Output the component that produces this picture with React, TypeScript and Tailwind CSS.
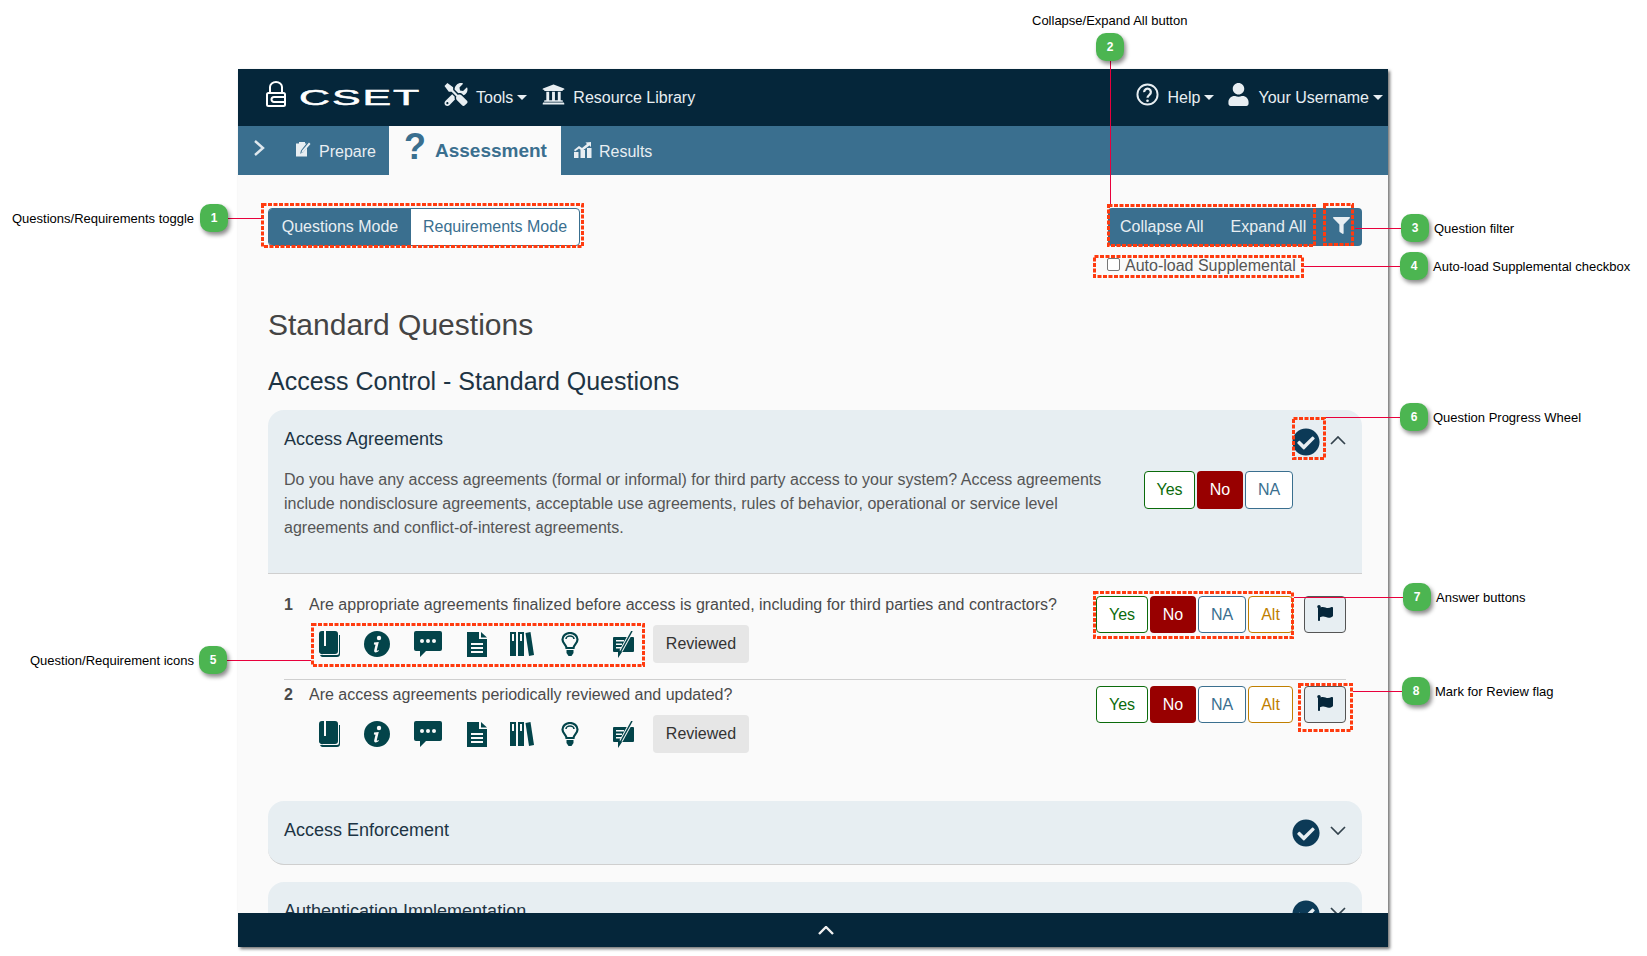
import { FaFilter, FaFlag, FaCheckCircle, FaUser, FaTools, FaUniversity } from 'react-icons/fa'

const Caret = () => (
  <span className="block ml-[4px] w-0 h-0 border-x-[5px] border-t-[5px] border-x-transparent border-t-[#e8eef2]" />
)

function BookIcon() {
  return (
    <svg viewBox="0 0 21 26" className="w-[21px] h-[26px] ml-[11px] fill-[#03444a]">
      <path d="M3 0h2v15h2V0h9a3 3 0 0 1 3 3v17a3 3 0 0 1-3 3H4a3 3 0 0 1-4-3V3a3 3 0 0 1 3-3z" />
      <path d="M20 4h1v19a3 3 0 0 1-3 3H4a3 3 0 0 1-3-2h17a2 2 0 0 0 2-2z" />
    </svg>
  )
}

function InfoIcon() {
  return (
    <svg viewBox="0 0 26 26" className="w-[26px] h-[26px] ml-[24px]">
      <circle cx="13" cy="13" r="13" fill="#03444a" />
      <circle cx="15" cy="7" r="2.2" fill="#fafafa" />
      <path d="M10 11.500l4.800-.6-2 8.200c-.2.8.4 1 1.600-.1l.5.7c-2 2.200-5.300 2.500-4.700-.4l1.300-5.600-1.600-.3z" fill="#fafafa" />
    </svg>
  )
}

function CommentIcon() {
  return (
    <svg viewBox="0 0 28 26" className="w-[28px] h-[26px] ml-[24px] fill-[#03444a]">
      <path d="M2 0h24a2 2 0 0 1 2 2v16a2 2 0 0 1-2 2H12l-6 6v-6H2a2 2 0 0 1-2-2V2a2 2 0 0 1 2-2z" />
      <circle cx="8" cy="10" r="2" fill="#fafafa" />
      <circle cx="14" cy="10" r="2" fill="#fafafa" />
      <circle cx="20" cy="10" r="2" fill="#fafafa" />
    </svg>
  )
}

function DocIcon() {
  return (
    <svg viewBox="0 0 20 25" className="w-[20px] h-[25px] ml-[25px] fill-[#03444a]">
      <path d="M0 0h12v7h8v18H0z" />
      <path d="M14 0l6 5.500h-6z" />
      <rect x="4" y="11" width="12" height="2" fill="#fafafa" />
      <rect x="4" y="15" width="12" height="2" fill="#fafafa" />
      <rect x="4" y="19" width="12" height="2" fill="#fafafa" />
    </svg>
  )
}

function BooksIcon() {
  return (
    <svg viewBox="0 0 24 24" className="w-[24px] h-[24px] ml-[23px] fill-[#03444a]">
      <path d="M0 0h6v24H0z" />
      <path d="M8 0h6v24H8z" />
      <path d="M15.500 1l5-1L24 23l-5 1z" />
      <rect x="2" y="2" width="2" height="7" fill="#fafafa" />
      <rect x="10" y="2" width="2" height="7" fill="#fafafa" />
    </svg>
  )
}

function BulbIcon() {
  return (
    <svg viewBox="0 0 18 24" className="w-[18px] h-[24px] ml-[27px]" fill="none" stroke="#03444a">
      <path d="M5.500 16c0-3-4-4.500-4-8.500a7.500 6.500 0 0 1 15 0c0 4-4 5.500-4 8.500z" strokeWidth="2.200" />
      <path d="M5 7a4 3 0 0 1 8 0" strokeWidth="1.600" />
      <path d="M5.500 18h7v3l-2 3h-3l-2-3z" fill="#03444a" stroke="none" />
    </svg>
  )
}

function NoteIcon() {
  return (
    <svg viewBox="0 0 21 27" className="w-[21px] h-[27px] ml-[34px] fill-[#03444a]">
      <path d="M1 6h19a1 1 0 0 1 1 1v13a1 1 0 0 1-1 1H9l-4 6v-6H1a1 1 0 0 1-1-1V7a1 1 0 0 1 1-1z" />
      <rect x="3" y="9" width="8" height="1.500" fill="#fafafa" />
      <rect x="3" y="12.500" width="6" height="1.500" fill="#fafafa" />
      <rect x="3" y="16" width="5" height="1.500" fill="#fafafa" />
      <path d="M19 0L8 20" stroke="#fafafa" strokeWidth="3.500" />
      <path d="M19 0L8 20" stroke="#03444a" strokeWidth="1.500" />
    </svg>
  )
}

function Chevron({ up }: { up?: boolean }) {
  return (
    <svg viewBox="0 0 16 9" className="w-[16px] h-[9px]" fill="none" stroke="#33424d" strokeWidth="1.700">
      <path d={up ? 'M1 8l7-7 7 7' : 'M1 1l7 7 7-7'} />
    </svg>
  )
}

function AnswerButtons({ alt, big }: { alt?: boolean; big?: boolean }) {
  return (
    <div className={`flex ${big ? 'h-[38px]' : 'h-[37px]'}`}>
      <button className={`${big ? 'w-[51px]' : 'w-[52px]'} rounded-[4px] border border-[#0b6b0b] bg-white text-[#0b6b0b]`}>Yes</button>
      <button className="w-[46px] ml-[2px] rounded-[4px] bg-[#980000] text-white">No</button>
      <button className="w-[48px] ml-[2px] rounded-[4px] border border-[#3a6f8f] bg-white text-[#3a6f8f]">NA</button>
      {alt && <button className="w-[45px] ml-[2px] rounded-[4px] border border-[#c07f00] bg-white text-[#c07f00]">Alt</button>}
    </div>
  )
}

function QuestionRow({ num, text, first }: { num: string; text: string; first?: boolean }) {
  return (
    <div className={`flex mx-[16px] justify-between ${first ? 'pt-[19px] h-[106px] border-b border-[#cfcfcf]' : 'pt-[3px] h-[90px]'}`}>
      <div>
        <div className="flex leading-[24px] text-[#4a4a4a]">
          <span className="w-[25px] font-bold">{num}</span>
          <span>{text}</span>
        </div>
        <div className="flex items-center mt-[8px] ml-[24px] h-[38px]">
          <BookIcon />
          <InfoIcon />
          <CommentIcon />
          <DocIcon />
          <BooksIcon />
          <BulbIcon />
          <NoteIcon />
          <button className="ml-[19px] w-[96px] h-[38px] rounded-[4px] bg-[#e6e6e6] text-[#333]">Reviewed</button>
        </div>
      </div>
      <div className="flex mt-[3px]">
        <AnswerButtons alt />
        <button className="ml-[11px] w-[42px] h-[37px] rounded-[4px] border border-[#555] bg-[#e7eef2] flex items-center justify-center">
          <FaFlag className="text-[#05263a] w-[16px] h-[16px] -mt-[4px]" />
        </button>
      </div>
    </div>
  )
}

function ClosedHeader({ title }: { title: string }) {
  return (
    <div className="flex justify-between pl-[16px] pr-[16px] pt-[17px]">
      <span className="leading-[24px] text-[18px] text-[#1d3444]">{title}</span>
      <div className="flex items-start">
        <FaCheckCircle className="w-[28px] h-[28px] -ml-px mt-[1px] text-[#0c3a57]" />
        <div className="ml-[10px] mt-[8px]"><Chevron /></div>
      </div>
    </div>
  )
}

const callouts = [
  { n: '1', box: 'left-[200px] top-[204px]', label: 'Questions/Requirements toggle', text: 'left-[12px] top-[211px]', line: 'left-[228px] top-[218px] w-[34px] h-px' },
  { n: '2', box: 'left-[1096px] top-[33px]', label: 'Collapse/Expand All button', text: 'left-[1032px] top-[13px]', line: 'left-[1110px] top-[61px] w-px h-[143px]' },
  { n: '3', box: 'left-[1401px] top-[214px]', label: 'Question filter', text: 'left-[1434px] top-[221px]', line: 'left-[1355px] top-[228px] w-[46px] h-px' },
  { n: '4', box: 'left-[1400px] top-[252px]', label: 'Auto-load Supplemental checkbox', text: 'left-[1433px] top-[259px]', line: 'left-[1304px] top-[266px] w-[96px] h-px' },
  { n: '5', box: 'left-[199px] top-[646px]', label: 'Question/Requirement icons', text: 'left-[30px] top-[653px]', line: 'left-[227px] top-[660px] w-[84px] h-px' },
  { n: '6', box: 'left-[1400px] top-[403px]', label: 'Question Progress Wheel', text: 'left-[1433px] top-[410px]', line: 'left-[1326px] top-[417px] w-[74px] h-px' },
  { n: '7', box: 'left-[1403px] top-[583px]', label: 'Answer buttons', text: 'left-[1436px] top-[590px]', line: 'left-[1294px] top-[597px] w-[109px] h-px' },
  { n: '8', box: 'left-[1402px] top-[677px]', label: 'Mark for Review flag', text: 'left-[1435px] top-[684px]', line: 'left-[1353px] top-[691px] w-[49px] h-px' },
]

const marks = [
  'left-[261px] top-[203px] w-[323px] h-[45px]',
  'left-[1107px] top-[204px] w-[209px] h-[43px]',
  'left-[1323px] top-[203px] w-[31px] h-[43px]',
  'left-[1093px] top-[255px] w-[211px] h-[23px]',
  'left-[311px] top-[623px] w-[334px] h-[44px]',
  'left-[1292px] top-[417px] w-[34px] h-[43px]',
  'left-[1093px] top-[591px] w-[201px] h-[48px]',
  'left-[1298px] top-[683px] w-[55px] h-[49px]',
]

export default function App() {
  return (
    <div className="relative w-[1647px] h-[956px] overflow-hidden bg-white font-['Liberation_Sans',Arial,sans-serif] text-[16px]">
      <div className="ml-[238px] mt-[69px] w-[1150px] h-[878px] flex flex-col shadow-[2px_2px_3px_rgba(0,0,0,0.55)] bg-[#fafafa] absolute top-0 left-0">
        {/* top nav */}
        <div className="h-[57px] shrink-0 bg-[#05263a] flex items-center justify-between text-[#e8eef2]">
          <div className="flex items-center">
            <svg viewBox="0 0 20 26" className="ml-[28px] -mt-[8px] w-[20px] h-[26px]" fill="none" stroke="#fff">
              <path d="M4 12V6a6 5 0 0 1 12 0v6" strokeWidth="2" />
              <rect x="1" y="12" width="18" height="13" rx="1.500" strokeWidth="2" />
              <path d="M19 16H8a2.500 2.500 0 0 0 0 5h11" strokeWidth="2" />
            </svg>
            <div className="ml-[13px] w-[118px] h-[24px]">
              <span className="inline-block origin-left scale-x-[1.95] text-[22px] leading-[24px] text-white tracking-[1px] [-webkit-text-stroke:0.5px_white]">CSET</span>
            </div>
            <FaTools className="ml-[27px] -mt-[7px] w-[24px] h-[23px]" />
            <span className="ml-[8px]">Tools</span>
            <Caret />
            <FaUniversity className="ml-[15px] -mt-[7px] w-[23px] h-[23px]" />
            <span className="ml-[8px]">Resource Library</span>
          </div>
          <div className="flex items-center pr-[5px]">
            <svg viewBox="0 0 24 24" className="-mt-[7px] w-[23px] h-[23px]" fill="none" stroke="#e8eef2" strokeWidth="2">
              <circle cx="12" cy="12" r="10.500" />
              <path d="M8.500 9.500a3.500 3.500 0 1 1 5.500 2.800c-1.300 1-2 1.700-2 3.200" strokeWidth="2.400" />
              <circle cx="12" cy="18.500" r="1.400" fill="#e8eef2" stroke="none" />
            </svg>
            <span className="ml-[9px]">Help</span>
            <Caret />
            <FaUser className="ml-[13px] -mt-[7px] w-[23px] h-[23px]" />
            <span className="ml-[8px]">Your Username</span>
            <Caret />
          </div>
        </div>

        {/* tabs */}
        <div className="h-[49px] shrink-0 bg-[#3a6f8f] flex items-center text-[#e8eef2]">
          <svg viewBox="0 0 12 16" className="ml-[15px] -mt-[6px] w-[12px] h-[16px]" fill="none" stroke="#dfe8ee" strokeWidth="2.400">
            <path d="M2 1l8 7-8 7" />
          </svg>
          <svg viewBox="0 0 16 16" className="ml-[30px] -mt-[3px] w-[16px] h-[16px]" fill="#e8eef2">
            <path d="M1 2.500h3V1h6v1.500h1.500L6 9.500l-.8 3.300L8.500 11 12 6.500v9H1z" />
            <path d="M14 1.500l1.500 1.500-7 8-2.200 1 .8-2.500z" />
          </svg>
          <span className="ml-[8px] w-[70px] mt-[2px]">Prepare</span>
          <div className="w-[172px] h-full bg-[#fafafa] flex items-center text-[#3a6f8f] font-bold">
            <span className="ml-[15px] text-[36px] leading-[40px] -mt-[7px]">?</span>
            <span className="ml-[9px] text-[19px] mt-[2px]">Assessment</span>
          </div>
          <svg viewBox="0 0 18 16" className="ml-[13px] -mt-[2px] w-[18px] h-[16px]" fill="#e8eef2">
            <rect x="0" y="10" width="4.500" height="6" />
            <rect x="6.500" y="8" width="4.500" height="8" />
            <rect x="13" y="6" width="4.500" height="10" />
            <path d="M0 8l5-4 3 2 5-4-1.500-1.500L17 0v5l-1.500-1.500L8 9 5 6.500 1 9.500z" />
          </svg>
          <span className="ml-[7px] mt-[2px]">Results</span>
        </div>

        {/* page content */}
        <div className="flex-1 min-h-0 overflow-hidden pl-[30px] pr-[26px] text-[#3a6f8f]">
          <div className="flex justify-between pt-[33px]">
            <div className="flex h-[38px] w-[312px] rounded-[4px] border border-[#3a6f8f] overflow-hidden bg-white">
              <div className="w-[142px] bg-[#3a6f8f] text-[#e8eef2] flex items-center justify-center">Questions Mode</div>
              <div className="flex-1 flex items-center justify-center">Requirements Mode</div>
            </div>
            <div className="flex flex-col items-start">
              <div className="flex h-[38px] w-[254px] rounded-[4px] bg-[#3a6f8f] text-[#e8eef2] items-center">
                <span className="ml-[12px]">Collapse All</span>
                <span className="ml-[27px]">Expand All</span>
                <FaFilter className="ml-[27px] w-[17px] h-[17px] -mt-[3px]" />
              </div>
              <label className="flex items-center mt-[8px] -ml-px h-[24px] text-[#555] leading-[24px]">
                <span className="w-[13px] h-[13px] border border-[#767676] rounded-[2px] bg-white -mt-[3px]" />
                <span className="ml-[5px]">Auto-load Supplemental</span>
              </label>
            </div>
          </div>

          <h1 className="mt-[28px] text-[30px] leading-[38px] text-[#444]">Standard Questions</h1>
          <h2 className="mt-[22px] text-[25px] leading-[30px] text-[#1d3444]">Access Control - Standard Questions</h2>

          {/* open group */}
          <div className="mt-[14px] h-[164px] rounded-t-[16px] bg-[#e7eef2] border-b border-[#cfcfcf] px-[16px] pt-[17px]">
            <div className="flex justify-between">
              <span className="leading-[24px] text-[18px] text-[#1d3444]">Access Agreements</span>
              <div className="flex items-start">
                <FaCheckCircle className="w-[28px] h-[28px] -ml-px mt-px text-[#0c3a57]" />
                <div className="ml-[10px] mt-[9px]"><Chevron up /></div>
              </div>
            </div>
            <div className="flex justify-between mt-[-5px] pr-[53px] pt-[17px]">
              <p className="w-[826px] leading-[24px] text-[#555]">
                Do you have any access agreements (formal or informal) for third party access to your system? Access agreements
                include nondisclosure agreements, acceptable use agreements, rules of behavior, operational or service level
                agreements and conflict-of-interest agreements.
              </p>
              <div className="mt-[3px]"><AnswerButtons big /></div>
            </div>
          </div>

          <QuestionRow first num="1" text="Are appropriate agreements finalized before access is granted, including for third parties and contractors?" />
          <QuestionRow num="2" text="Are access agreements periodically reviewed and updated?" />

          <div className="mt-[31px] h-[64px] rounded-[16px] bg-[#e7eef2] border-b border-[#cfcfcf]">
            <ClosedHeader title="Access Enforcement" />
          </div>
          <div className="mt-[17px] h-[64px] rounded-t-[16px] bg-[#e7eef2]">
            <ClosedHeader title="Authentication Implementation" />
          </div>
        </div>

        <div className="h-[34px] shrink-0 bg-[#05263a] flex items-center justify-center">
          <svg viewBox="0 0 16 9" className="w-[16px] h-[9px] ml-[26px]" fill="none" stroke="#f0f0f0" strokeWidth="2.400">
            <path d="M1 8l7-7 7 7" />
          </svg>
        </div>
      </div>

      {/* annotation overlays */}
      {marks.map((m) => (
        <svg key={m} className={`absolute overflow-visible ${m}`}>
          <rect x="1.500" y="1.500" className="w-[calc(100%-3px)] h-[calc(100%-3px)]" fill="none" stroke="#ff3b0f" strokeWidth="3" strokeDasharray="4 1.500" />
        </svg>
      ))}
      {callouts.map((c) => (
        <div key={c.n}>
          <div className={`absolute bg-[#e8003c] ${c.line}`} />
          <div className={`absolute w-[28px] h-[28px] rounded-[10px] bg-[#4cb551] text-white text-[12px] font-bold flex items-center justify-center shadow-[2px_3px_4px_rgba(0,0,0,0.45)] ${c.box}`}>{c.n}</div>
          <div className={`absolute text-[13px] leading-[16px] text-black whitespace-nowrap ${c.text}`}>{c.label}</div>
        </div>
      ))}
    </div>
  )
}
